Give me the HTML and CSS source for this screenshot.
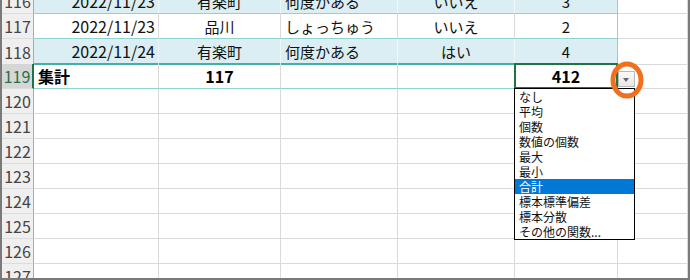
FILE: index.html
```html
<!DOCTYPE html>
<html lang="ja">
<head>
    <meta charset="UTF-8">
    <title>集計行</title>
    <link rel="stylesheet" href="styles.css">
</head>
<body>
    <div class="frame">
        <div class="sheet">
            <div class="row band">
                <div class="rh">116</div>
                <div class="c t num">2022/11/23</div>
                <div class="c t mid">有楽町</div>
                <div class="c t left">何度かある</div>
                <div class="c t mid">いいえ</div>
                <div class="c t mid last">3</div>
                <div class="c"></div>
            </div>
            <div class="row">
                <div class="rh">117</div>
                <div class="c t num">2022/11/23</div>
                <div class="c t mid">品川</div>
                <div class="c t left">しょっちゅう</div>
                <div class="c t mid">いいえ</div>
                <div class="c t mid last">2</div>
                <div class="c"></div>
            </div>
            <div class="row band before-total">
                <div class="rh">118</div>
                <div class="c t num">2022/11/24</div>
                <div class="c t mid">有楽町</div>
                <div class="c t left">何度かある</div>
                <div class="c t mid">はい</div>
                <div class="c t mid last">4</div>
                <div class="c"></div>
            </div>
            <div class="row total">
                <div class="rh active">119</div>
                <div class="c t left">集計</div>
                <div class="c t mid">117</div>
                <div class="c t"></div>
                <div class="c t"></div>
                <div class="c t mid last selected">412
                    <span class="drop-btn"></span>
                    <ul class="drop-list">
                        <li>なし</li>
                        <li>平均</li>
                        <li>個数</li>
                        <li>数値の個数</li>
                        <li>最大</li>
                        <li>最小</li>
                        <li class="hot">合計</li>
                        <li>標本標準偏差</li>
                        <li>標本分散</li>
                        <li>その他の関数...</li>
                    </ul>
                    <svg class="ring" width="40" height="44" viewBox="0 0 40 44">
                        <ellipse cx="19" cy="21" rx="14" ry="16" fill="none" stroke="#f07020" stroke-width="5"/>
                    </svg>
                </div>
                <div class="c"></div>
            </div>
            <div class="row"><div class="rh">120</div><div class="c"></div><div class="c"></div><div class="c"></div><div class="c"></div><div class="c"></div><div class="c"></div></div>
            <div class="row"><div class="rh">121</div><div class="c"></div><div class="c"></div><div class="c"></div><div class="c"></div><div class="c"></div><div class="c"></div></div>
            <div class="row"><div class="rh">122</div><div class="c"></div><div class="c"></div><div class="c"></div><div class="c"></div><div class="c"></div><div class="c"></div></div>
            <div class="row"><div class="rh">123</div><div class="c"></div><div class="c"></div><div class="c"></div><div class="c"></div><div class="c"></div><div class="c"></div></div>
            <div class="row"><div class="rh">124</div><div class="c"></div><div class="c"></div><div class="c"></div><div class="c"></div><div class="c"></div><div class="c"></div></div>
            <div class="row"><div class="rh">125</div><div class="c"></div><div class="c"></div><div class="c"></div><div class="c"></div><div class="c"></div><div class="c"></div></div>
            <div class="row"><div class="rh">126</div><div class="c"></div><div class="c"></div><div class="c"></div><div class="c"></div><div class="c"></div><div class="c"></div></div>
            <div class="row"><div class="rh">127</div><div class="c"></div><div class="c"></div><div class="c"></div><div class="c"></div><div class="c"></div><div class="c"></div></div>
        </div>
    </div>
</body>
</html>
```

FILE: styles.css
```css
/* Base */
body {
    margin: 0;
    font-family: "Noto Sans CJK JP", "Noto Sans", sans-serif;
    background: #fff;
}

.frame {
    width: 690px;
    height: 280px;
    box-sizing: border-box;
    border-left: 2px solid #7a7a7a;
    border-right: 2px solid #7a7a7a;
    border-bottom: 2px solid #7a7a7a;
    overflow: hidden;
}

.sheet {
    margin-top: -11px;
}

/* Rows and cells */
.row {
    display: grid;
    grid-template-columns: 32px 125px 122px 117px 117px 103px 1fr;
    height: 25px;
}

.rh,
.c {
    box-sizing: border-box;
    display: flex;
    align-items: center;
    border-right: 1px solid #dadada;
    border-bottom: 1px solid #dadada;
    font-size: 15px;
    color: #111;
    white-space: nowrap;
}

.rh {
    justify-content: center;
    background: #efefef;
    border-right-color: #ababab;
    border-bottom-color: #dcdcdc;
    color: #444;
    font-size: 16px;
}

.rh.active {
    background: #d6d6d6;
    color: #217346;
    border-right: 2px solid #217346;
}

.num { justify-content: flex-end; padding-right: 3px; font-size: 16px; }
.mid { justify-content: center; }
.left { padding-left: 4px; }

/* Table band */
.t {
    border-bottom-color: #8ed3cf;
}

.t.last {
    border-right-color: #8ed3cf;
}

.band .t {
    background: #daeef3;
    border-right-color: #eef8f9;
}

.band .t.last {
    border-right-color: #8ed3cf;
}

.before-total .t {
    border-bottom: 2px solid #45aea6;
}

.total .t {
    font-weight: bold;
    font-size: 16px;
    color: #000;
}

/* Selected total cell */
.selected {
    position: relative;
}

.selected::after {
    content: "";
    position: absolute;
    top: -1px;
    left: -1px;
    right: -1px;
    bottom: -1px;
    border: 2px solid #217346;
}

.drop-btn {
    position: absolute;
    left: 103px;
    top: 7px;
    width: 17px;
    height: 16px;
    box-sizing: border-box;
    border: 1px solid #b9b9b9;
    background: linear-gradient(#fbfbfb, #e6e6e6);
}

.drop-btn::after {
    content: "";
    position: absolute;
    left: 4px;
    top: 6px;
    border-left: 3.5px solid transparent;
    border-right: 3.5px solid transparent;
    border-top: 4px solid #666;
}

.ring {
    position: absolute;
    left: 93px;
    top: -5px;
    z-index: 3;
}

/* Function list */
.drop-list {
    position: absolute;
    left: -1px;
    top: 24px;
    width: 121px;
    height: 152px;
    box-sizing: border-box;
    margin: 0;
    padding: 0;
    list-style: none;
    background: #fff;
    border: 1px solid #000;
    font-weight: normal;
    z-index: 2;
}

.drop-list li {
    height: 15px;
    line-height: 15px;
    padding-left: 4px;
    font-size: 12px;
    color: #111;
}

.drop-list li.hot {
    background: #0078d7;
    color: #fff;
}
```
